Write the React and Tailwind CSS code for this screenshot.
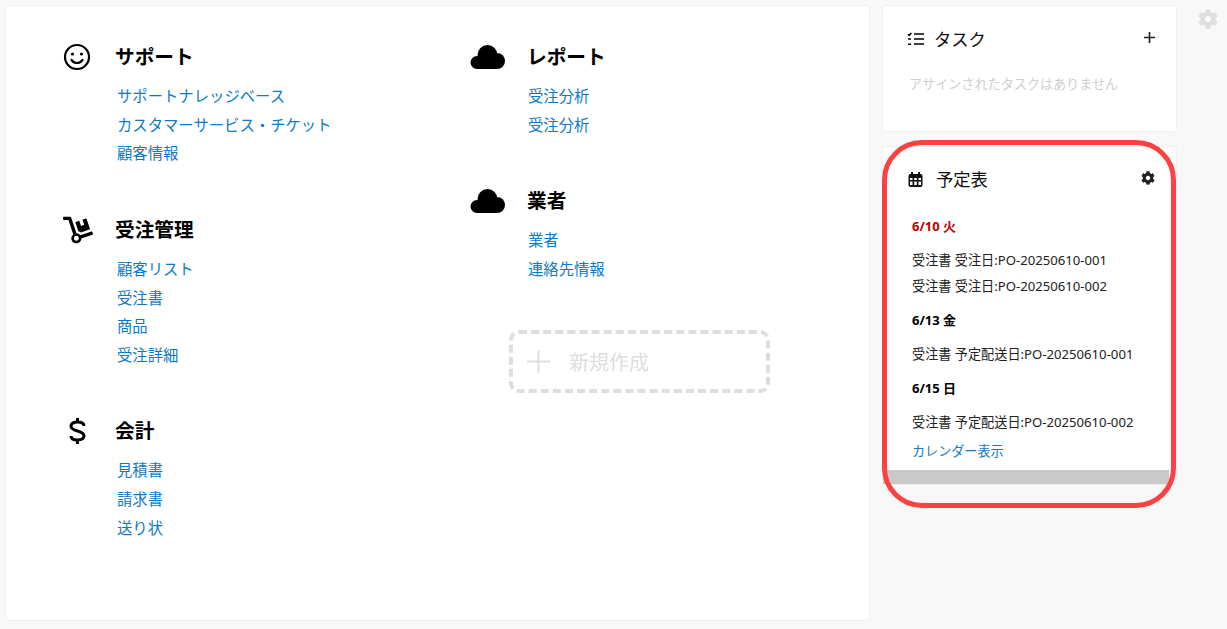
import React from 'react'
import { FaDolly, FaCog } from 'react-icons/fa'

const SmileIcon = () => (
  <svg width="28" height="28" viewBox="0 0 28 28" fill="none" stroke="#000" strokeWidth="2.2">
    <circle cx="14" cy="14" r="12" />
    <circle cx="9.5" cy="11" r="1.6" fill="#000" stroke="none" />
    <circle cx="18.5" cy="11" r="1.6" fill="#000" stroke="none" />
    <path d="M8.5 17c1.4 2 3.2 3 5.500 3s4.100-1 5.500-3" strokeLinecap="round" />
  </svg>
)

const DollarIcon = () => (
  <svg width="17" height="26" viewBox="0 0 17 26" fill="none" stroke="#000" strokeWidth="3">
    <path d="M15 8c0-2.500-2.500-4-6.500-4S2 5.500 2 8.200 5 12 8.500 13s6.500 2 6.500 4.800S12.500 22 8.500 22 2 20.500 2 18M8.500 0v4M8.500 22v4" />
  </svg>
)

const CloudIcon = () => (
  <svg width="35" height="24" viewBox="0 0 35 24" fill="#000">
    <circle cx="7" cy="17.500" r="6.500" />
    <circle cx="17.500" cy="10" r="10" />
    <circle cx="27" cy="16" r="8" />
    <rect x="7" y="14" width="20" height="10" />
  </svg>
)

const TaskIcon = () => (
  <svg width="18" height="14" viewBox="0 0 18 14" fill="none" stroke="#000" strokeWidth="1.6">
    <path d="M1 2.200l1.200 1.200L4.400 1M1 7h3M1 12.200h3M7 2h10M7 7h10M7 12h10" />
  </svg>
)

const CalendarIcon = () => (
  <svg width="15" height="15" viewBox="0 0 15 15">
    <rect x="0.500" y="2" width="14" height="13" rx="2" fill="#111" />
    <rect x="3" y="0" width="2" height="3" fill="#111" />
    <rect x="10" y="0" width="2" height="3" fill="#111" />
    <path d="M2 6h2.500v2H2zM6.200 6h2.600v2H6.200zM10.500 6H13v2h-2.500zM2 9.500h2.500V13H2zM6.200 9.500h2.600V13H6.200zM10.500 9.500H13V13h-2.500z" fill="#fff" />
  </svg>
)

const PlusIcon = ({ size, stroke, color }) => (
  <svg width={size} height={size} viewBox="0 0 24 24" fill="none" stroke={color} strokeWidth={stroke} className="shrink-0">
    <path d="M12 0v24M0 12h24" />
  </svg>
)

const Section = ({ icon, title, links, iconClass, linkClass }) => (
  <div className="mb-[41.5px]">
    <div className="flex h-10 items-center">
      <div className={iconClass}>{icon}</div>
      <div className="text-[19.7px] font-bold text-black">{title}</div>
    </div>
    <ul className={linkClass}>
      {links.map((l, i) => (
        <li key={i} className="flex h-[28.6px] items-center text-[15.35px] text-[#0f7ac6]">{l}</li>
      ))}
    </ul>
  </div>
)

const DateRow = ({ children, red }) => (
  <div className={red ? 'flex h-[26px] items-center text-[13px] font-bold text-[#c40000]' : 'mt-[8px] flex h-[26px] items-center text-[13px] font-bold text-black'}>
    {children}
  </div>
)

const Item = ({ children }) => (
  <div className="flex h-[26px] items-center text-[13.15px] text-[#222]">{children}</div>
)

export default function App() {
  const leftIcon = 'w-[61px] shrink-0 pl-[9px]'
  const leftLinks = 'mt-[5.5px] pl-[63px]'
  const rightIcon = 'w-[66px] shrink-0 pl-[9px]'
  const rightLinks = 'mt-[5.5px] pl-[67px]'

  return (
    <div className="relative flex h-[629px] w-[1227px] items-start overflow-hidden bg-[#f8f8f8] pt-[5px] pl-[5px] font-['Noto_Sans','Noto_Sans_CJK_JP',sans-serif]">
      <div className="flex h-[616px] w-[865px] rounded border border-[#f0f0f0] bg-white pt-[31px]">
        <div className="ml-[48px] w-[407px]">
          <Section icon={<SmileIcon />} iconClass={leftIcon} linkClass={leftLinks} title="サポート" links={['サポートナレッジベース', 'カスタマーサービス・チケット', '顧客情報']} />
          <Section icon={<FaDolly size={30} color="#000" />} iconClass={leftIcon} linkClass={leftLinks} title="受注管理" links={['顧客リスト', '受注書', '商品', '受注詳細']} />
          <Section icon={<div className="pl-[6px]"><DollarIcon /></div>} iconClass={leftIcon} linkClass={leftLinks} title="会計" links={['見積書', '請求書', '送り状']} />
        </div>
        <div className="w-[320px]">
          <Section icon={<CloudIcon />} iconClass={rightIcon} linkClass={rightLinks} title="レポート" links={['受注分析', '受注分析']} />
          <Section icon={<CloudIcon />} iconClass={rightIcon} linkClass={rightLinks} title="業者" links={['業者', '連絡先情報']} />
          <div className="ml-[48px] mt-[46px] flex h-[63px] w-[261px] items-center rounded-[10px] border-4 border-dashed border-[#dedede] pl-[14px] text-[20px] text-[#dedede]">
            <PlusIcon size={23} stroke={2} color="#dedede" />
            <span className="ml-[19px] mt-[3px]">新規作成</span>
          </div>
        </div>
      </div>

      <div className="ml-[12px] w-[295px]">
        <div className="h-[127px] rounded border border-[#f0f0f0] bg-white px-[24px] pt-[21px]">
          <div className="flex h-6 items-center">
            <TaskIcon />
            <span className="ml-[9px] mt-[1px] text-[17.3px] text-[#111]">タスク</span>
            <div className="ml-auto -mr-[3px] mb-[4px]">
              <PlusIcon size={11} stroke={3.600} color="#222" />
            </div>
          </div>
          <div className="ml-[2px] mt-[24px] text-[13.1px] text-[#d0d0d0]">アサインされたタスクはありません</div>
        </div>

        <div className="mt-[14px] flex h-[339px] flex-col rounded border border-[#f0f0f0] bg-white">
          <div className="flex-1 pl-[29px] pr-[21px] pt-[21px]">
            <div className="-ml-[4px] flex h-6 items-center">
              <div className="mb-[2px]">
                <CalendarIcon />
              </div>
              <span className="ml-[13px] text-[17.3px] text-[#111]">予定表</span>
              <FaCog size={14} color="#222" className="ml-auto mb-[4px]" />
            </div>
            <div className="mt-[22px]" />
            <DateRow red>6/10 火</DateRow>
            <div className="mt-[8px]" />
            <Item>受注書 受注日:PO-20250610-001</Item>
            <Item>受注書 受注日:PO-20250610-002</Item>
            <DateRow>6/13 金</DateRow>
            <div className="mt-[8px]" />
            <Item>受注書 予定配送日:PO-20250610-001</Item>
            <DateRow>6/15 日</DateRow>
            <div className="mt-[8px]" />
            <Item>受注書 予定配送日:PO-20250610-002</Item>
            <div className="mt-[3px] flex h-[26px] items-center text-[13.1px] text-[#0f7ac6]">カレンダー表示</div>
          </div>
          <div className="mr-[7px] h-[14px] bg-[#c9c9c9]" />
        </div>
      </div>

      <FaCog size={20} color="#dedede" className="ml-[21px] mt-[4px]" />

      <div className="absolute left-[882px] top-[140px] h-[368px] w-[294px] rounded-[40px] border-[5px] border-[#fb4141]" />
    </div>
  )
}
